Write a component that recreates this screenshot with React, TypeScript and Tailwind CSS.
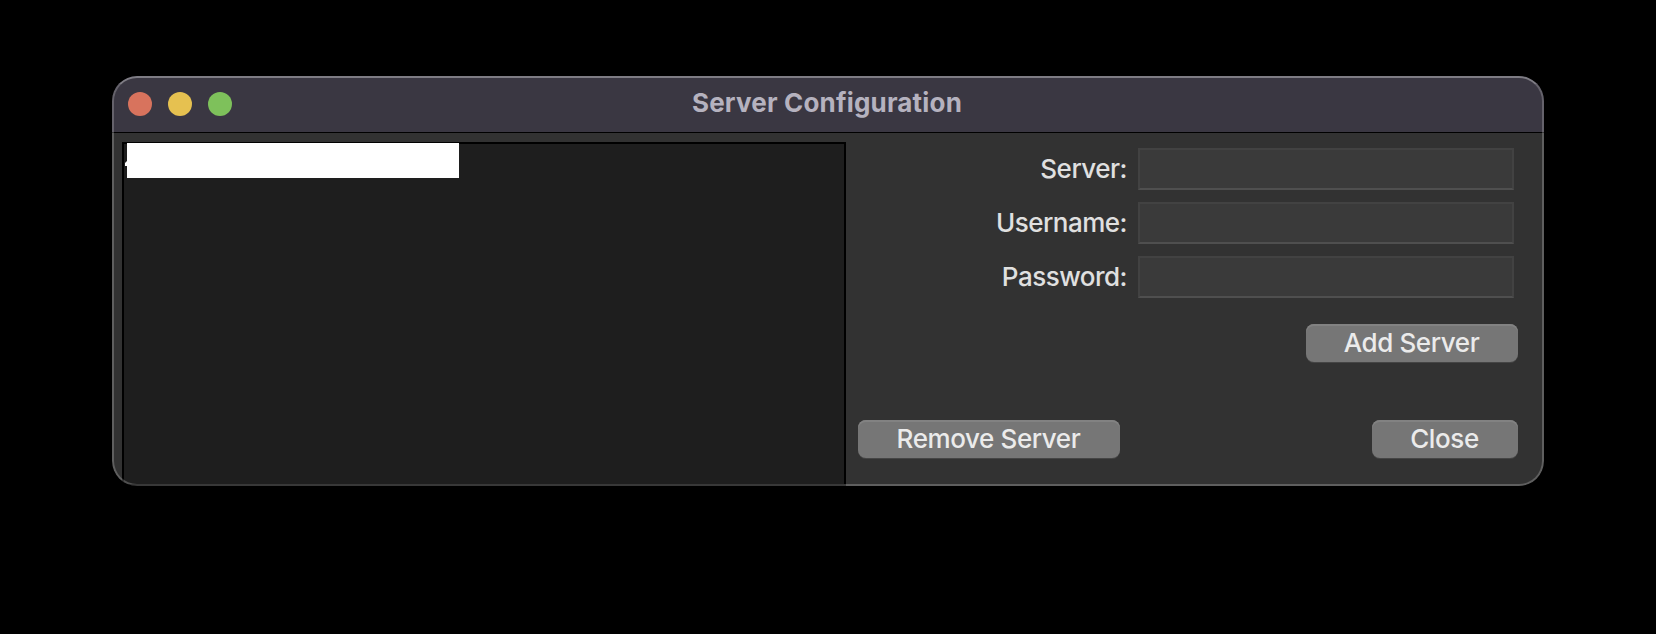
import type { ReactNode } from "react";

function Field({ label }: { label: string }) {
  return (
    <label className="flex h-[42px] items-center justify-end">
      <span className="mr-[11px] text-[26px] leading-[42px] font-[450] tracking-[-0.5px] whitespace-nowrap">{label}</span>
      <input className="h-[42px] w-[376px] border-2 border-[#424242] border-b-[#4f4f4f] bg-[#3a3a3a] px-2 text-2xl outline-none" />
    </label>
  );
}

function Button({ className, children }: { className: string; children: ReactNode }) {
  return (
    <button
      className={`flex h-[38px] items-center justify-center rounded-[8px] bg-[#767676] pr-px pb-px text-[26px] leading-none font-[450] tracking-[-0.4px] whitespace-nowrap text-[#ebebeb] shadow-[inset_0_2px_0_#828282,0_1px_0_#454545] ${className}`}
    >
      {children}
    </button>
  );
}

export default function App() {
  return (
    <main className="h-[634px] w-[1656px] bg-black pt-[76px] pl-[112px] font-['Inter',sans-serif]">
      <section className="relative flex h-[410px] w-[1432px] flex-col overflow-hidden rounded-[25px] bg-[#323232] text-[#e0e0e0]">
        <header className="grid h-[57px] shrink-0 grid-cols-[1fr_auto_1fr] items-center border-b border-black bg-[#3a3742] px-4">
          <div className="flex gap-4">
            <span className="size-6 rounded-full bg-[#d8735d]" />
            <span className="size-6 rounded-full bg-[#e6c150]" />
            <span className="size-6 rounded-full bg-[#7ec15b]" />
          </div>
          <h1 className="relative top-[-1px] left-[-1px] text-[26px] leading-none font-bold tracking-[0.18px] text-[#b5b2bf]">
            Server Configuration
          </h1>
        </header>
        <div className="flex flex-1 pl-[10px]">
          <div className="mt-[9px] w-[724px] border-2 border-black bg-[#1e1e1e]">
            <div className="-mt-px ml-[3px] h-[35px] w-[332px] bg-white" />
          </div>
          <div className="flex flex-1 flex-col pt-[15px] pr-[26px] pl-3">
            <div className="flex flex-col gap-3 pr-1">
              <Field label="Server:" />
              <Field label="Username:" />
              <Field label="Password:" />
            </div>
            <div className="mt-[26px] flex justify-end">
              <Button className="w-[212px]">Add Server</Button>
            </div>
            <div className="mt-[58px] flex justify-between">
              <Button className="w-[262px]">Remove Server</Button>
              <Button className="w-[146px]">Close</Button>
            </div>
          </div>
        </div>
        <svg className="pointer-events-none absolute top-[84px] left-[12px]" width="4" height="6">
          <path d="M3 1L1 3V6H4V1Z" fill="#fff" />
        </svg>
        <div className="pointer-events-none absolute inset-0 rounded-[25px] border-2 border-white/22 border-t-white/35" />
      </section>
    </main>
  );
}
